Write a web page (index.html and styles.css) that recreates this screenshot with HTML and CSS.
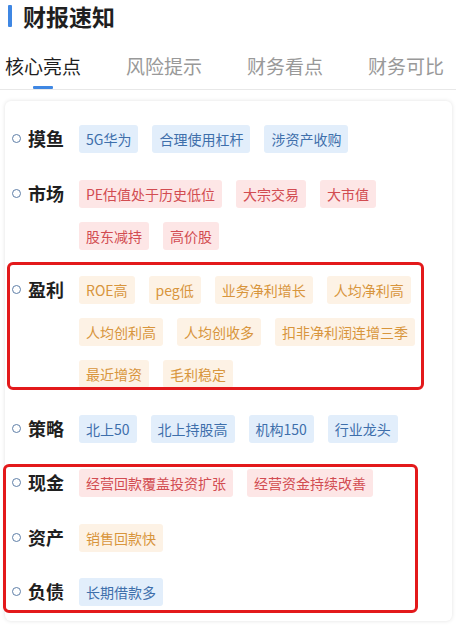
FILE: index.html
```html
<!DOCTYPE html>
<html lang="zh-CN">
<head>
    <meta charset="UTF-8">
    <meta name="viewport" content="width=device-width, initial-scale=1.0">
    <title>财报速知</title>
    <link rel="stylesheet" href="styles.css">
</head>
<body>
    <!-- Section header -->
    <div class="section-header">
        <span class="section-bar"></span>
        <h2>财报速知</h2>
    </div>

    <!-- Tabs -->
    <div class="tab-bar">
        <div class="tab active">
            <span>核心亮点</span>
            <i class="tab-line"></i>
        </div>
        <div class="tab"><span>风险提示</span></div>
        <div class="tab"><span>财务看点</span></div>
        <div class="tab"><span>财务可比</span></div>
    </div>

    <!-- Highlight card -->
    <div class="card">
        <div class="row">
            <span class="dot"></span>
            <span class="label">摸鱼</span>
            <div class="tags">
                <span class="tag blue">5G华为</span>
                <span class="tag blue">合理使用杠杆</span>
                <span class="tag blue">涉资产收购</span>
            </div>
        </div>
        <div class="row">
            <span class="dot"></span>
            <span class="label">市场</span>
            <div class="tags">
                <span class="tag red">PE估值处于历史低位</span>
                <span class="tag red">大宗交易</span>
                <span class="tag red">大市值</span>
                <span class="tag red">股东减持</span>
                <span class="tag red">高价股</span>
            </div>
        </div>
        <div class="row">
            <span class="dot"></span>
            <span class="label">盈利</span>
            <div class="tags">
                <span class="tag orange">ROE高</span>
                <span class="tag orange">peg低</span>
                <span class="tag orange">业务净利增长</span>
                <span class="tag orange">人均净利高</span>
                <span class="tag orange">人均创利高</span>
                <span class="tag orange">人均创收多</span>
                <span class="tag orange">扣非净利润连增三季</span>
                <span class="tag orange">最近增资</span>
                <span class="tag orange">毛利稳定</span>
            </div>
        </div>
        <div class="row">
            <span class="dot"></span>
            <span class="label">策略</span>
            <div class="tags">
                <span class="tag blue">北上50</span>
                <span class="tag blue">北上持股高</span>
                <span class="tag blue">机构150</span>
                <span class="tag blue">行业龙头</span>
            </div>
        </div>
        <div class="row">
            <span class="dot"></span>
            <span class="label">现金</span>
            <div class="tags">
                <span class="tag red">经营回款覆盖投资扩张</span>
                <span class="tag red">经营资金持续改善</span>
            </div>
        </div>
        <div class="row">
            <span class="dot"></span>
            <span class="label">资产</span>
            <div class="tags">
                <span class="tag orange">销售回款快</span>
            </div>
        </div>
        <div class="row">
            <span class="dot"></span>
            <span class="label">负债</span>
            <div class="tags">
                <span class="tag blue">长期借款多</span>
            </div>
        </div>
    </div>

    <!-- Red annotation frames drawn over the card -->
    <div class="mark mark-profit"></div>
    <div class="mark mark-balance"></div>
</body>
</html>
```

FILE: styles.css
```css
:root {
    --primary-color: #3f87e3;
    --text-dark: #1f1f1f;
    --text-gray: #999999;
    --line-color: #e8e8e8;
    --mark-color: #e3191b;
}

body {
    margin: 0;
    background: #ffffff;
    color: var(--text-dark);
    font-family: 'Noto Sans CJK SC', 'Noto Sans', sans-serif;
    position: relative;
    width: 456px;
    height: 625px;
    overflow: hidden;
}

.section-header {
    display: flex;
    align-items: center;
    height: 22px;
    padding: 5px 8px 0;
}

.section-bar {
    width: 4px;
    height: 22px;
    background: var(--primary-color);
    border-radius: 1px;
}

h2 {
    margin: 0 0 0 11px;
    font-size: 23px;
    line-height: 22px;
    font-weight: 600;
    color: var(--text-dark);
}

.tab-bar {
    display: flex;
    gap: 45px;
    margin-top: 25px;
    padding-left: 5px;
    height: 37px;
    border-bottom: 1px solid var(--line-color);
    white-space: nowrap;
}

.tab {
    display: flex;
    flex-direction: column;
    align-items: center;
    font-size: 19px;
    line-height: 28px;
    color: var(--text-gray);
}

.tab.active {
    color: var(--text-dark);
}

.tab-line {
    display: block;
    width: 20px;
    height: 3px;
    margin-top: 6px;
    background: var(--primary-color);
    border-radius: 1px;
}

.card {
    display: flex;
    flex-direction: column;
    gap: 26.5px;
    margin: 11px 4px 0 5px;
    padding: 24px 12px 15px 7px;
    border-radius: 6px;
    box-shadow: 0 0 4px rgba(0, 0, 0, 0.12);
    background: #ffffff;
}

.row {
    display: flex;
    align-items: flex-start;
}

.dot {
    flex: none;
    width: 7px;
    height: 7px;
    margin-top: 9px;
    border: 1px solid #5f7fa8;
    border-radius: 50%;
}

.label {
    flex: none;
    width: 51px;
    margin-left: 7px;
    font-size: 18px;
    line-height: 26px;
    font-weight: 700;
    color: var(--text-dark);
}

.tags {
    display: flex;
    flex-wrap: wrap;
    gap: 14px;
}

.tag {
    padding: 0 7px;
    height: 28px;
    line-height: 28px;
    font-size: 14px;
    border-radius: 3px;
    white-space: nowrap;
}

.tag.blue {
    background: #e2eefb;
    color: #3e6fab;
}

.tag.red {
    background: #fde6e6;
    color: #d24c51;
}

.tag.orange {
    background: #fdf2e5;
    color: #d8953c;
}

.mark {
    position: absolute;
    border: 3px solid var(--mark-color);
    border-radius: 6px;
    box-sizing: border-box;
}

.mark-profit {
    left: 7px;
    top: 262px;
    width: 417px;
    height: 128px;
}

.mark-balance {
    left: 3px;
    top: 464px;
    width: 415px;
    height: 149px;
}
```
